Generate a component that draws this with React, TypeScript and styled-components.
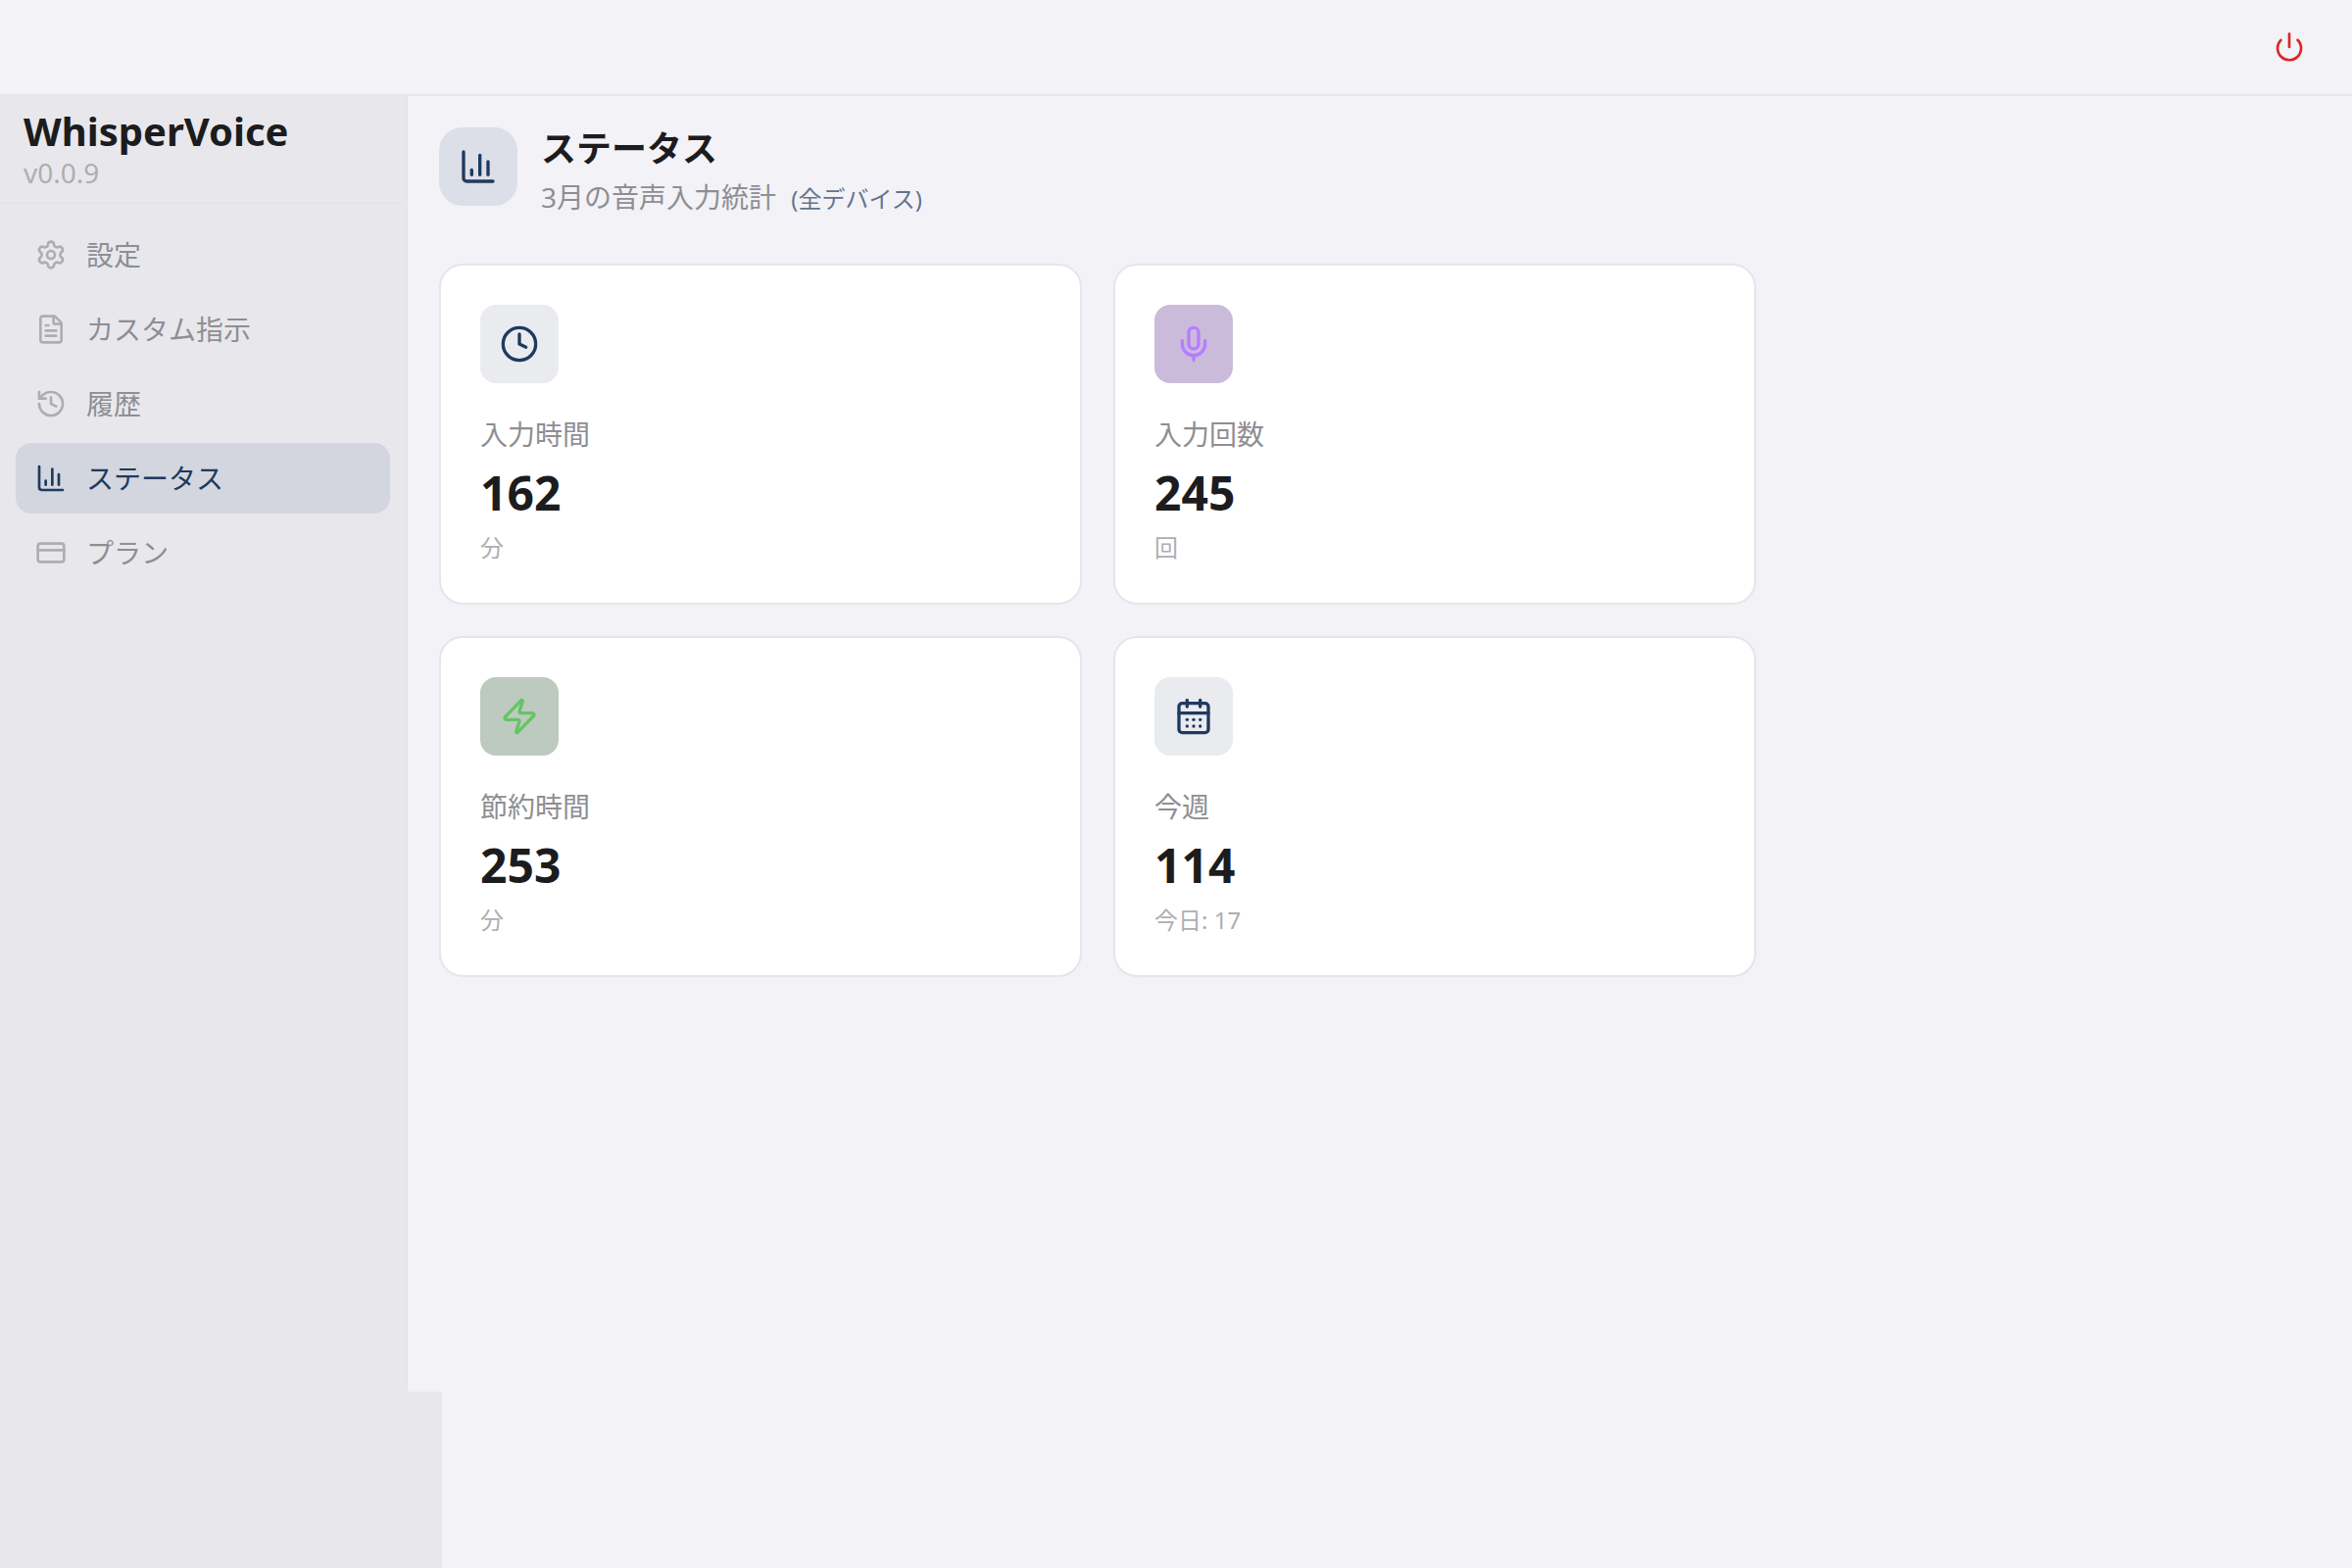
import React from 'react';
import styled, { createGlobalStyle } from 'styled-components';
import {
  CalendarDays,
  ChartColumn,
  Clock,
  CreditCard,
  FileText,
  History,
  Mic,
  Power,
  Settings,
  Zap,
  type LucideIcon,
} from 'lucide-react';

const color = {
  page: '#f2f2f7',
  sidebar: '#e8e8ec',
  line: '#e5e5ea',
  sidebarLine: '#e5e5e9',
  ink: '#1c1c1e',
  muted: '#8e8e93',
  faint: '#aeaeb2',
  accent: '#1e3a5f',
  danger: '#dc2626',
};

const GlobalStyle = createGlobalStyle`
  *, *::before, *::after { box-sizing: border-box; }
  body {
    margin: 0;
    background: ${color.page};
    color: ${color.ink};
    font-family: "Noto Sans", "Noto Sans CJK JP", sans-serif;
    -webkit-font-smoothing: antialiased;
  }
  h1, h2, p, ul, dl, dd { margin: 0; padding: 0; }
`;

const Page = styled.div`
  display: grid;
  grid-template-rows: auto 1fr 180px;
  min-height: 100vh;
`;

const TopBar = styled.header`
  display: flex;
  justify-content: flex-end;
  padding: 16px 48px;
  border-bottom: 2px solid ${color.line};
`;

const PowerButton = styled.button`
  display: flex;
  padding: 16px;
  margin-right: -16px;
  border: 0;
  border-radius: 16px;
  background: none;
  color: ${color.danger};
  cursor: pointer;
`;

const Body = styled.div`
  display: flex;
`;

const Sidebar = styled.aside`
  flex: 0 0 416px;
  background: ${color.sidebar};
  border-right: 2px solid ${color.sidebarLine};
`;

const Brand = styled.div`
  padding: 12px 24px;
  border-bottom: 2px solid ${color.sidebarLine};
`;

const BrandName = styled.h1`
  font-size: 40px;
  line-height: 48px;
  font-weight: 700;
`;

const Version = styled.p`
  font-size: 28px;
  line-height: 36px;
  color: ${color.faint};
`;

const NavList = styled.ul`
  display: flex;
  flex-direction: column;
  gap: 4px;
  padding: 16px;
  list-style: none;
`;

const NavButton = styled.button<{ $active: boolean }>`
  display: flex;
  align-items: center;
  gap: 20px;
  width: 100%;
  padding: 16px 20px;
  border: 0;
  border-radius: 16px;
  background: ${({ $active }) => ($active ? 'rgba(30, 58, 95, 0.1)' : 'none')};
  color: ${({ $active }) => ($active ? color.accent : color.muted)};
  font-family: inherit;
  font-size: 28px;
  line-height: 40px;
  font-weight: 400;
  text-align: left;
  cursor: pointer;

  svg {
    flex: none;
    color: ${({ $active }) => ($active ? color.accent : color.faint)};
  }
`;

const Main = styled.main`
  flex: 1;
  min-width: 0;
  padding: 32px;
`;

const Heading = styled.div`
  display: flex;
  align-items: flex-start;
  gap: 24px;
  margin-bottom: 48px;
`;

const HeadingIcon = styled.span`
  display: grid;
  place-items: center;
  width: 80px;
  height: 80px;
  border-radius: 24px;
  background: rgba(30, 58, 95, 0.1);
  color: ${color.accent};
`;

const Title = styled.h2`
  margin-bottom: 8px;
  font-size: 36px;
  line-height: 44px;
  font-weight: 700;
`;

const Subtitle = styled.p`
  font-size: 28px;
  line-height: 39px;
  color: ${color.muted};
`;

const Scope = styled.span`
  margin-left: 8px;
  font-size: 24px;
  line-height: 1;
  color: rgba(30, 58, 95, 0.7);
`;

const Cards = styled.dl`
  display: grid;
  grid-template-columns: repeat(2, 1fr);
  gap: 32px;
  max-width: 1344px;
`;

const Card = styled.div`
  padding: 40px;
  border: 2px solid ${color.line};
  border-radius: 24px;
  background: #fff;
`;

const CardIcon = styled.span<{ $fg: string; $bg: string }>`
  display: grid;
  place-items: center;
  width: 80px;
  height: 80px;
  margin-bottom: 32px;
  border-radius: 16px;
  background: ${({ $bg }) => $bg};
  color: ${({ $fg }) => $fg};
`;

const CardLabel = styled.dt`
  font-size: 28px;
  line-height: 40px;
  color: ${color.muted};
`;

const CardValue = styled.dd`
  && { margin: 8px 0; }
  font-size: 48px;
  line-height: 64px;
  font-weight: 700;
`;

const CardNote = styled.dd`
  font-size: 24px;
  line-height: 32px;
  color: ${color.faint};
`;

const Footer = styled.div`
  display: flex;
`;

const FooterPanel = styled.div`
  flex: 0 0 451px;
  background: ${color.sidebar};
`;

const navItems: { label: string; icon: LucideIcon }[] = [
  { label: '設定', icon: Settings },
  { label: 'カスタム指示', icon: FileText },
  { label: '履歴', icon: History },
  { label: 'ステータス', icon: ChartColumn },
  { label: 'プラン', icon: CreditCard },
];

const stats: { label: string; value: number; note: string; icon: LucideIcon; fg: string; bg: string }[] = [
  { label: '入力時間', value: 162, note: '分', icon: Clock, fg: color.accent, bg: '#e9ebef' },
  { label: '入力回数', value: 245, note: '回', icon: Mic, fg: '#b77dff', bg: '#cabbdb' },
  { label: '節約時間', value: 253, note: '分', icon: Zap, fg: '#64c466', bg: '#bdcabf' },
  { label: '今週', value: 114, note: '今日: 17', icon: CalendarDays, fg: color.accent, bg: '#e9ebef' },
];

export default function App() {
  const [active, setActive] = React.useState('ステータス');

  return (
    <Page lang="ja">
      <GlobalStyle />
      <TopBar>
        <PowerButton type="button" aria-label="終了">
          <Power size={32} />
        </PowerButton>
      </TopBar>
      <Body>
        <Sidebar>
          <Brand>
            <BrandName>WhisperVoice</BrandName>
            <Version>v0.0.9</Version>
          </Brand>
          <nav>
            <NavList>
              {navItems.map(({ label, icon: Icon }) => (
                <li key={label}>
                  <NavButton
                    type="button"
                    $active={label === active}
                    aria-current={label === active ? 'page' : undefined}
                    onClick={() => setActive(label)}
                  >
                    <Icon size={32} />
                    {label}
                  </NavButton>
                </li>
              ))}
            </NavList>
          </nav>
        </Sidebar>
        <Main>
          <Heading>
            <HeadingIcon>
              <ChartColumn size={40} />
            </HeadingIcon>
            <div>
              <Title>ステータス</Title>
              <Subtitle>
                3月の音声入力統計 <Scope>(全デバイス)</Scope>
              </Subtitle>
            </div>
          </Heading>
          <Cards>
            {stats.map(({ label, value, note, icon: Icon, fg, bg }) => (
              <Card key={label}>
                <CardIcon $fg={fg} $bg={bg}>
                  <Icon size={40} />
                </CardIcon>
                <CardLabel>{label}</CardLabel>
                <CardValue>{value}</CardValue>
                <CardNote>{note}</CardNote>
              </Card>
            ))}
          </Cards>
        </Main>
      </Body>
      <Footer>
        <FooterPanel />
      </Footer>
    </Page>
  );
}
